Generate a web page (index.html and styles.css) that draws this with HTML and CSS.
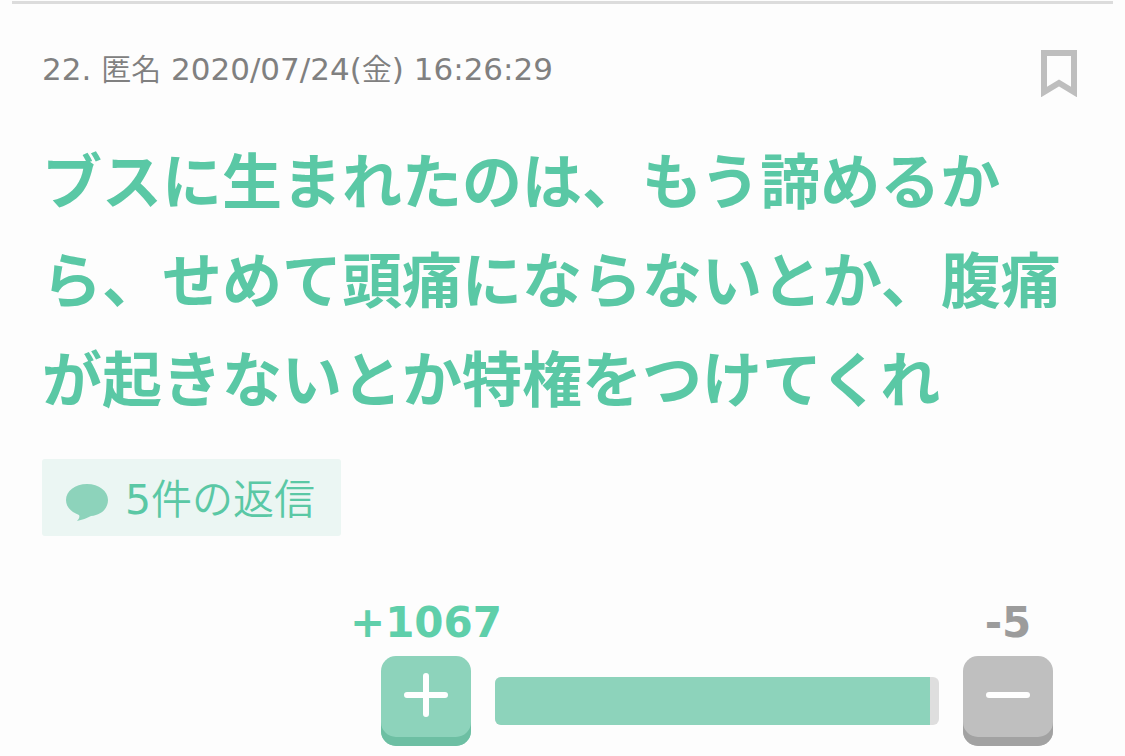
FILE: index.html
```html
<!DOCTYPE html>
<html lang="ja">
<head>
  <meta charset="UTF-8">
  <meta name="viewport" content="width=device-width, initial-scale=1">
  <title>コメント 22</title>
  <link rel="stylesheet" href="styles.css">
</head>
<body>
  <article class="comment">
    <header class="comment-head">
      <p class="meta">22. <span class="kanji">匿名</span> <time datetime="2020-07-24T16:26:29">2020/07/24(<span class="kanji">金</span>) 16:26:29</time></p>
      <button class="bookmark" type="button" aria-label="ブックマーク">
        <svg width="36" height="48" viewBox="0 0 36 48">
          <path d="M3 4H33V43L18 34L3 43Z" fill="none" stroke="#bebebe" stroke-width="6"/>
        </svg>
      </button>
    </header>

    <p class="body">ブスに生まれたのは、もう諦めるから、せめて頭痛にならないとか、腹痛が起きないとか特権をつけてくれ</p>

    <a class="replies" href="#replies">
      <svg width="44" height="38" viewBox="0 0 44 38">
        <path d="M22 1C10 1 1 8 1 17C1 24 6 29 14 32C15 34 14 36 12 38C17 37 22 35 26 33C37 32 43 25 43 17C43 8 34 1 22 1Z" fill="#8dd3bb"/>
      </svg>
      <span class="replies-text">5<span class="kanji">件の返信</span></span>
    </a>

    <div class="votes">
      <div class="vote plus">
        <span class="count">+1067</span>
        <button type="button" aria-label="プラス">
          <svg width="46" height="46" viewBox="0 0 46 46">
            <path d="M23 4V42M4 23H42" stroke="#fff" stroke-width="6" stroke-linecap="round"/>
          </svg>
        </button>
      </div>
      <!-- share of plus votes -->
      <div class="bar"><div class="bar-plus"></div></div>
      <div class="vote minus">
        <span class="count">-5</span>
        <button type="button" aria-label="マイナス">
          <svg width="46" height="46" viewBox="0 0 46 46">
            <path d="M4 23H42" stroke="#fff" stroke-width="6" stroke-linecap="round"/>
          </svg>
        </button>
      </div>
    </div>
  </article>
</body>
</html>
```
FILE: styles.css
```css
* {
  box-sizing: border-box;
}

body {
  margin: 0;
  background-color: #fdfdfd;
  font-family: "DejaVu Sans", "Noto Sans CJK JP", sans-serif;
}

button {
  border: none;
  padding: 0;
  cursor: pointer;
}

svg {
  display: block;
}

.kanji {
  font-family: "Noto Sans CJK JP", sans-serif;
  font-weight: 350;
}

.comment {
  margin: 1px 12px 0;
  padding: 45px 30px 0;
  border-top: 3px solid #dcdcdc;
}

.comment-head {
  display: flex;
  justify-content: space-between;
  align-items: flex-start;
  padding-right: 6px;
}

.meta {
  margin: 0;
  font-size: 31px;
  line-height: 36px;
  color: #808080;
}

.meta .kanji {
  font-size: 30px;
}

.bookmark {
  background: none;
}

.body {
  margin: 31px 0 0;
  font-family: "Noto Sans CJK JP", sans-serif;
  font-size: 60px;
  font-weight: bold;
  line-height: 99px;
  color: #5ac8a5;
}

.replies {
  display: inline-flex;
  align-items: center;
  gap: 16px;
  margin-top: 34px;
  padding: 0 26px 0 23px;
  height: 77px;
  border-radius: 3px;
  background-color: #ebf6f3;
  color: #5ac8a5;
  font-size: 41px;
  line-height: 60px;
  text-decoration: none;
}

.replies svg {
  margin-top: 8px;
}

.votes {
  display: flex;
  align-items: flex-end;
  gap: 24px;
  max-width: 672px;
  margin: 57px 30px 0 auto;
}

.vote {
  display: flex;
  flex-direction: column;
  align-items: center;
  width: 90px;
}

.count {
  padding-bottom: 3px;
  font-size: 42px;
  font-weight: bold;
  line-height: 60px;
  white-space: nowrap;
}

.vote button {
  display: flex;
  justify-content: center;
  width: 90px;
  height: 90px;
  padding-top: 16px;
  border-radius: 15px;
}

.plus .count {
  color: #5fcfaa;
}

.minus .count {
  color: #9c9c9c;
}

.plus button {
  background-color: #8dd3bb;
  box-shadow: inset 0 -9px #6dbfa3;
}

.minus button {
  background-color: #bfbfbf;
  box-shadow: inset 0 -9px #a2a2a2;
}

.bar {
  flex: 1;
  height: 48px;
  margin-bottom: 21px;
  border-radius: 6px;
  background-color: #dedede;
  overflow: hidden;
}

.bar-plus {
  width: 98%;
  height: 100%;
  background-color: #8dd3bb;
}
```
